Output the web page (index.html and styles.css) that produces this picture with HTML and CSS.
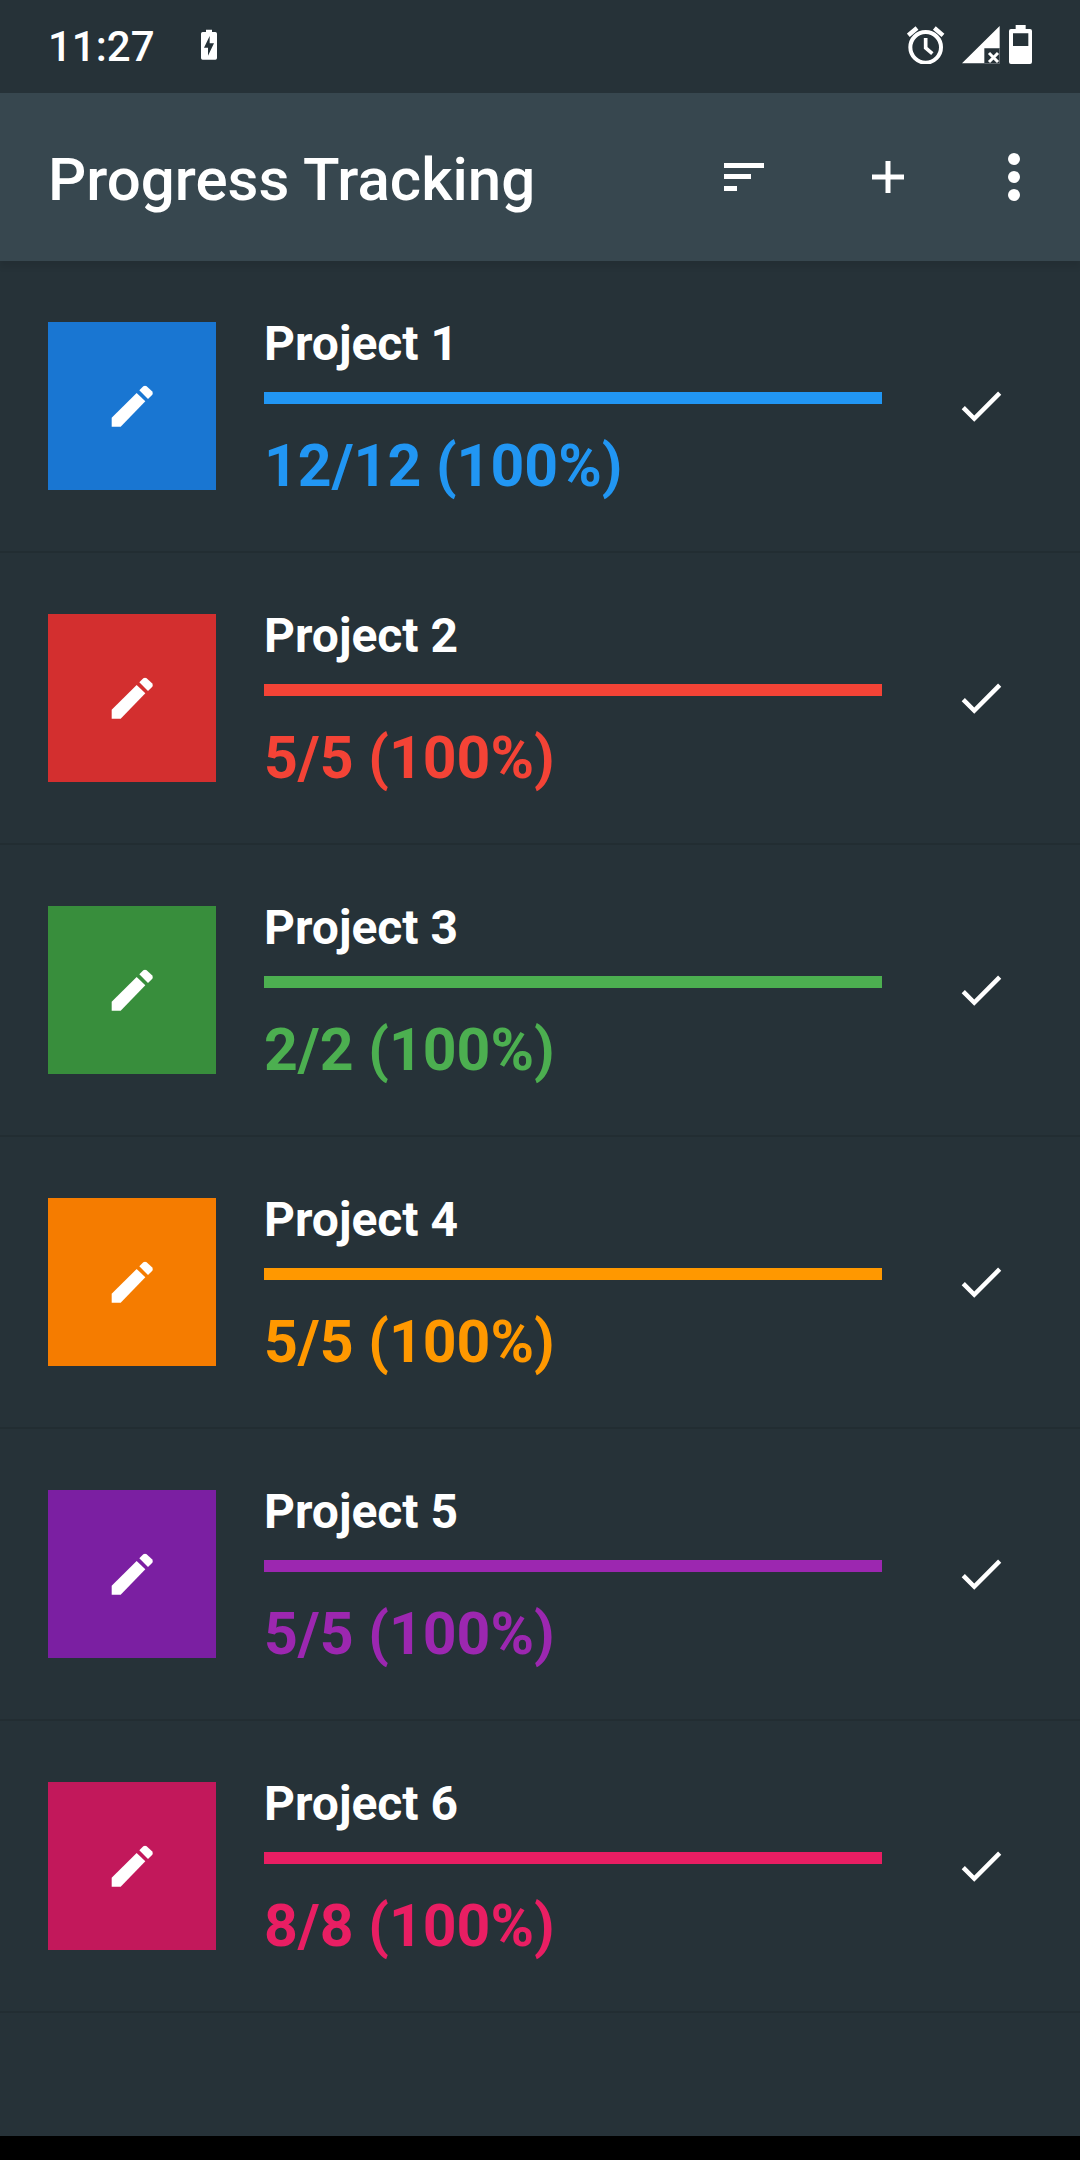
FILE: index.html
```html
<!DOCTYPE html>
<html lang="en">

<head>
  <meta charset="UTF-8">
  <meta name="viewport" content="width=device-width, initial-scale=1.0">
  <title>Progress Tracking</title>
  <link rel="stylesheet" href="styles.css">
</head>

<body>
  <!-- shared icons -->
  <svg class="sprite" aria-hidden="true">
    <symbol id="pencil" viewBox="332 285 126 126">
      <path d="M334 383L409 309L435 334L361 410H334Z" />
      <path d="M417 301L429 289Q434 285 439 289L455 304Q459 309 456 314L443 327Z" />
    </symbol>
    <symbol id="check" viewBox="0 0 24 24">
      <path d="M9 16.170L4.830 12l-1.420 1.410L9 19 21 7l-1.410-1.410z" />
    </symbol>
  </svg>

  <div class="status-bar">
    <span class="clock">11:27</span>
    <svg class="charging" viewBox="0 0 48 93" aria-hidden="true">
      <path fill-rule="evenodd" d="M15 2H33V9H43Q48 9 48 14V87Q48 92 43 92H5Q0 92 0 87V14Q0 9 5 9H15ZM26 21L9 56H21V80L39 43H26Z" />
    </svg>
    <div class="status-icons">
      <svg class="alarm" viewBox="0 0 114 114" aria-hidden="true">
        <g fill="none" stroke="#fff">
          <circle cx="56" cy="64" r="46" stroke-width="12" />
          <path d="M4 28L30 6M82 6L108 28" stroke-width="13" />
          <path d="M56 36V66L76 83" stroke-width="11" />
        </g>
      </svg>
      <svg class="signal" viewBox="0 0 114 114" aria-hidden="true">
        <path d="M0 112L113 0V67H67V112Z" />
        <path d="M81 81L108 108M108 81L81 108" fill="none" stroke="#fff" stroke-width="9" />
        <path d="M67 112.500H112.500V67" fill="none" stroke="#7d8488" stroke-width="2" />
      </svg>
      <svg class="battery" viewBox="0 0 69 117" aria-hidden="true">
        <path fill-rule="evenodd" d="M20 0H50V12H63Q69 12 69 18V111Q69 117 63 117H6Q0 117 0 111V18Q0 12 6 12H20ZM12 25V63H58V25Z" />
      </svg>
    </div>
  </div>

  <header class="app-bar">
    <h1>Progress Tracking</h1>
    <button class="action" aria-label="Sort">
      <svg width="42" height="28" viewBox="0 0 42 28">
        <path d="M1 0H41V5H1ZM1 11H28V16H1ZM1 23H14V28H1Z" />
      </svg>
    </button>
    <button class="action" aria-label="Add project">
      <svg width="32" height="32" viewBox="0 0 32 32">
        <path d="M13.500 0H18.500V13.500H32V18.500H18.500V32H13.500V18.500H0V13.500H13.500Z" />
      </svg>
    </button>
    <button class="action action-more" aria-label="More options">
      <svg width="12" height="48" viewBox="0 0 12 48">
        <circle cx="6" cy="6" r="6" />
        <circle cx="6" cy="24" r="6" />
        <circle cx="6" cy="42" r="6" />
      </svg>
    </button>
  </header>

  <main>
    <ul class="projects">
      <li class="project blue">
        <button class="edit" aria-label="Edit Project 1"><svg><use href="#pencil" /></svg></button>
        <div class="info">
          <h2>Project 1</h2>
          <progress max="12" value="12" aria-label="Project 1 progress"></progress>
          <p>12/12 (100%)</p>
        </div>
        <button class="done" aria-label="Complete Project 1"><svg><use href="#check" /></svg></button>
      </li>
      <li class="project red">
        <button class="edit" aria-label="Edit Project 2"><svg><use href="#pencil" /></svg></button>
        <div class="info">
          <h2>Project 2</h2>
          <progress max="5" value="5" aria-label="Project 2 progress"></progress>
          <p>5/5 (100%)</p>
        </div>
        <button class="done" aria-label="Complete Project 2"><svg><use href="#check" /></svg></button>
      </li>
      <li class="project green">
        <button class="edit" aria-label="Edit Project 3"><svg><use href="#pencil" /></svg></button>
        <div class="info">
          <h2>Project 3</h2>
          <progress max="2" value="2" aria-label="Project 3 progress"></progress>
          <p>2/2 (100%)</p>
        </div>
        <button class="done" aria-label="Complete Project 3"><svg><use href="#check" /></svg></button>
      </li>
      <li class="project orange">
        <button class="edit" aria-label="Edit Project 4"><svg><use href="#pencil" /></svg></button>
        <div class="info">
          <h2>Project 4</h2>
          <progress max="5" value="5" aria-label="Project 4 progress"></progress>
          <p>5/5 (100%)</p>
        </div>
        <button class="done" aria-label="Complete Project 4"><svg><use href="#check" /></svg></button>
      </li>
      <li class="project purple">
        <button class="edit" aria-label="Edit Project 5"><svg><use href="#pencil" /></svg></button>
        <div class="info">
          <h2>Project 5</h2>
          <progress max="5" value="5" aria-label="Project 5 progress"></progress>
          <p>5/5 (100%)</p>
        </div>
        <button class="done" aria-label="Complete Project 5"><svg><use href="#check" /></svg></button>
      </li>
      <li class="project pink">
        <button class="edit" aria-label="Edit Project 6"><svg><use href="#pencil" /></svg></button>
        <div class="info">
          <h2>Project 6</h2>
          <progress max="8" value="8" aria-label="Project 6 progress"></progress>
          <p>8/8 (100%)</p>
        </div>
        <button class="done" aria-label="Complete Project 6"><svg><use href="#check" /></svg></button>
      </li>
    </ul>
  </main>

  <div class="nav-bar"></div>
</body>

</html>
```
FILE: styles.css
```css
* {
  box-sizing: border-box;
}

body {
  display: flex;
  flex-direction: column;
  min-height: 100vh;
  margin: 0;
  background: #263238;
  color: #fff;
  font-family: Roboto, sans-serif;
}

h1, h2, p, ul {
  margin: 0;
  padding: 0;
}

svg {
  display: block;
  fill: #fff;
}

.sprite {
  display: none;
}

button {
  display: flex;
  align-items: center;
  justify-content: center;
  flex: none;
  padding: 0;
  border: 0;
  background: none;
  color: inherit;
  cursor: pointer;
}

/* status bar */
.status-bar {
  display: flex;
  align-items: center;
  height: 93px;
  padding: 0 48px;
}

.status-bar svg {
  margin-bottom: 4px;
}

.clock {
  font-size: 42px;
  font-weight: 500;
  line-height: 49px;
}

.charging {
  width: 16px;
  height: 31px;
  margin-left: 46px;
}

.status-icons {
  display: flex;
  align-items: center;
  gap: 9px;
  margin-left: auto;
}

.alarm {
  width: 38px;
  height: 38px;
  margin-right: 8px;
}

.signal {
  width: 38px;
  height: 38px;
}

.battery {
  width: 23px;
  height: 39px;
}

/* app bar */
.app-bar {
  display: flex;
  align-items: center;
  height: 168px;
  padding: 0 12px 0 48px;
  background: #37474f;
  box-shadow: 0 6px 6px rgba(0, 0, 0, 0.08);
}

.app-bar h1 {
  flex: 1;
  padding-top: 6px;
  font-size: 60px;
  font-weight: 500;
  line-height: 70px;
}

.action {
  width: 144px;
  height: 144px;
}

.action-more {
  width: 108px;
}

/* project list */
main {
  flex: 1;
}

.projects {
  list-style: none;
}

.project {
  display: flex;
  align-items: center;
  height: 292px;
  padding-left: 48px;
  border-bottom: 2px solid #222d32;
}

.edit {
  width: 168px;
  height: 168px;
  background: var(--dark);
}

.edit svg {
  width: 42px;
  height: 42px;
}

.info {
  flex: 1;
  margin-left: 48px;
}

.info h2 {
  font-size: 48px;
  font-weight: 700;
  line-height: 68px;
}

.info progress {
  display: block;
  width: 100%;
  height: 12px;
  margin: 14px 0 26px;
  border: 0;
  background: var(--dark);
  appearance: none;
  -webkit-appearance: none;
}

.info progress::-webkit-progress-bar {
  background: var(--dark);
}

.info progress::-webkit-progress-value {
  background: var(--main);
}

.info progress::-moz-progress-bar {
  background: var(--main);
}

.info p {
  color: var(--main);
  font-size: 59px;
  font-weight: 700;
  line-height: 72px;
}

.done {
  width: 198px;
  height: 168px;
}

.done svg {
  width: 54px;
  height: 54px;
}

.blue {
  --dark: #1976d2;
  --main: #2196f3;
}

.red {
  --dark: #d32f2f;
  --main: #f44336;
}

.green {
  --dark: #388e3c;
  --main: #4caf50;
}

.orange {
  --dark: #f57c00;
  --main: #ff9800;
}

.purple {
  --dark: #7b1fa2;
  --main: #9c27b0;
}

.pink {
  --dark: #c2185b;
  --main: #e91e63;
}

.nav-bar {
  height: 24px;
  background: #000;
}
```
